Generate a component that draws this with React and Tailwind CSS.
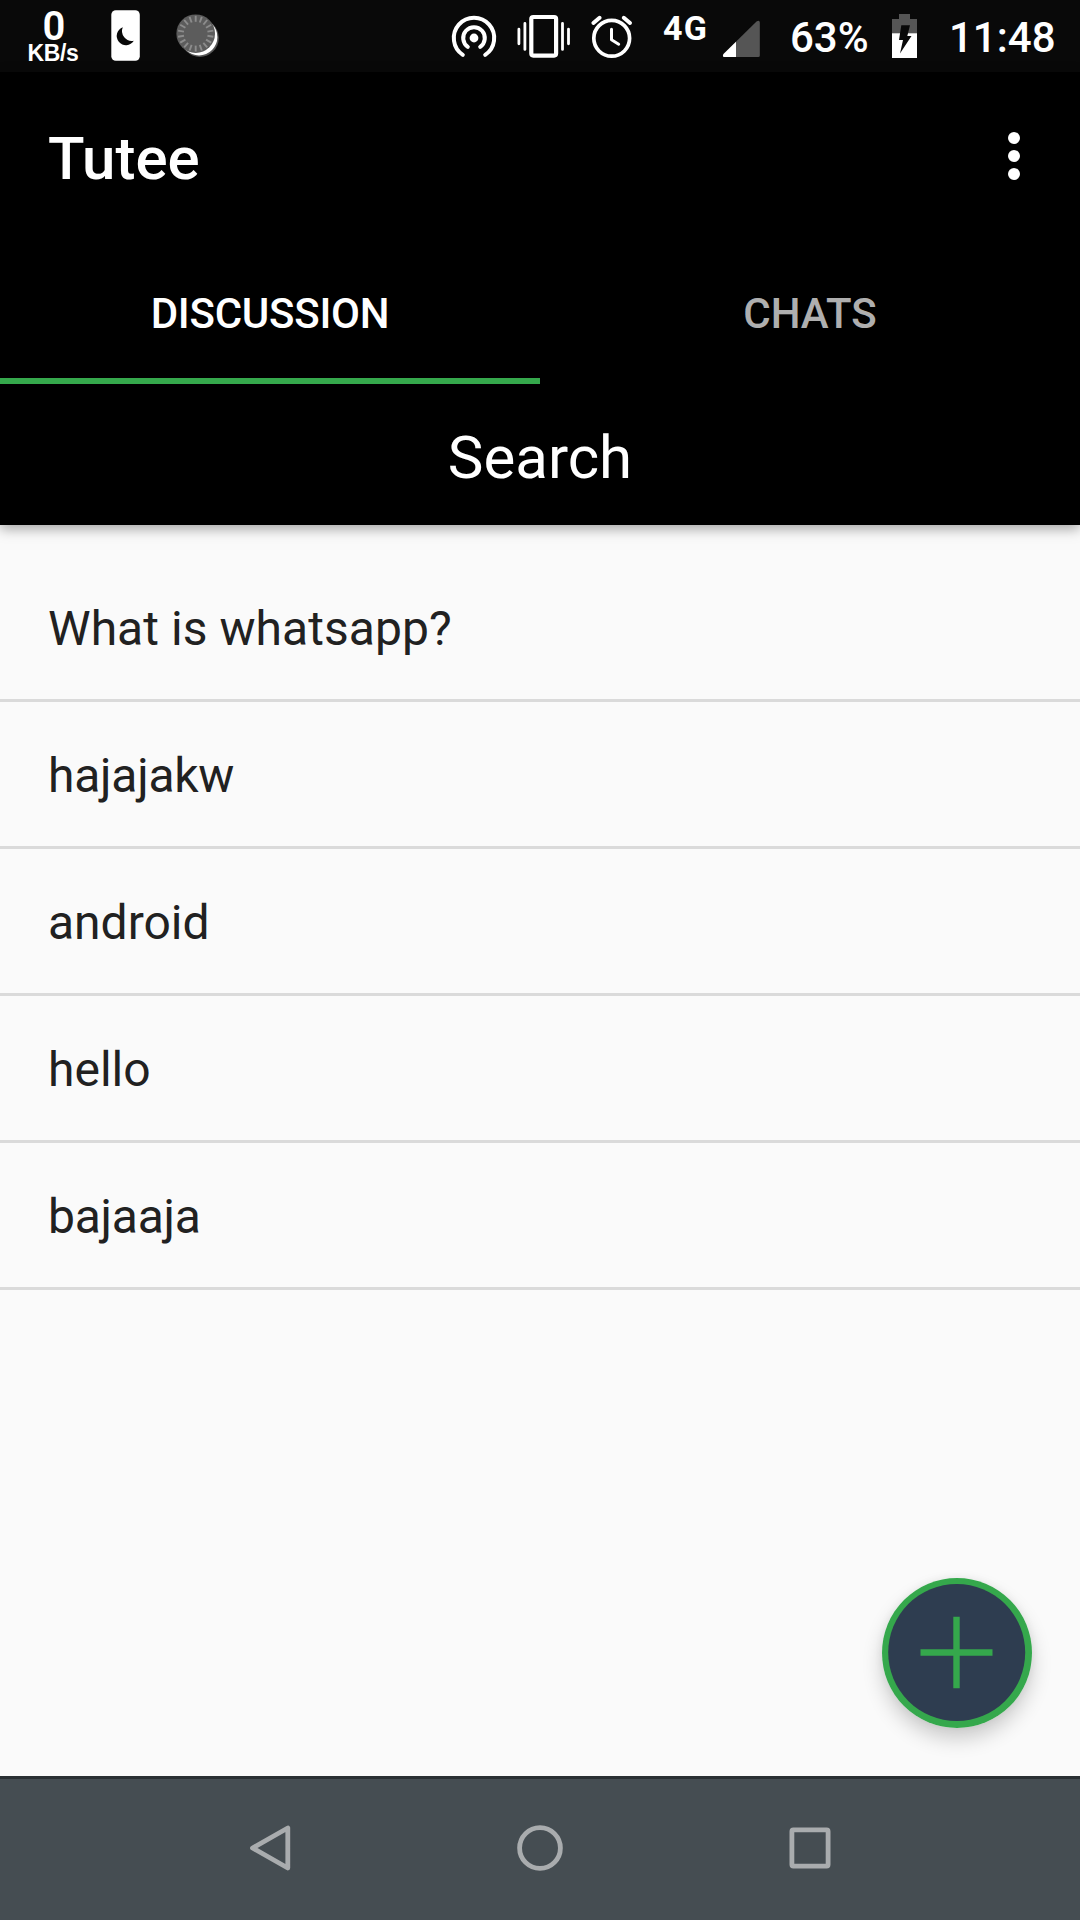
import React from 'react';

const topics = [
  { text: 'What is whatsapp?', tracking: 'tracking-[0.05px]' },
  { text: 'hajajakw', tracking: 'tracking-[-0.25px]' },
  { text: 'android', tracking: 'tracking-normal' },
  { text: 'hello', tracking: 'tracking-normal' },
  { text: 'bajaaja', tracking: 'tracking-[-0.25px]' },
];

const ticks = Array.from({ length: 18 }, (_, i) => i * 20);

function SystemBar() {
  return (
    <div className="flex h-[72px] w-full shrink-0 bg-[#090909] text-white">
      <div className="flex w-[106px] flex-col items-center pt-[6px] font-semibold">
        <span className="h-[37px] pl-[2px] text-[40px] leading-[41px]">0</span>
        <span className="font-['Liberation_Sans',sans-serif] text-[23px] leading-[20px] font-bold tracking-[-0.4px]">KB/s</span>
      </div>
      <svg className="h-[72px] w-[144px]" viewBox="106 0 144 72">
        <rect x="111.3" y="10.3" width="28.5" height="50.5" rx="4.5" fill="#fff" />
        <path d="M122.8 27.3A9.2 9.2 0 1 0 133.8 40.7A9.8 9.8 0 0 1 122.8 27.3Z" fill="#090909" />
        <circle cx="199.8" cy="37.9" r="19" fill="#555" />
        <circle cx="199" cy="37" r="18.4" fill="#fff" />
        <circle cx="195.7" cy="33.7" r="19.3" fill="#5c5c5c" />
        <g stroke="#8c8c8c" strokeWidth="1.9">
          {ticks.map((a) => (
            <path key={a} d="M195.7 15.8v6" transform={`rotate(${a} 195.7 33.7)`} />
          ))}
        </g>
      </svg>
      <svg className="ml-auto h-[72px] w-[210px] shrink-0" viewBox="444 0 210 72" fill="none" stroke="#fff" strokeLinecap="round" strokeLinejoin="round">
        <circle cx="474" cy="38" r="4.4" fill="#fff" stroke="none" />
        <path d="M467.8 46.8A10.8 10.8 0 1 1 480.2 46.8" strokeWidth="4" />
        <path d="M462.8 54.8A20.2 20.2 0 1 1 485.2 54.8" strokeWidth="4" />
        <rect x="531.3" y="17" width="24.8" height="38.6" rx="2" strokeWidth="4.2" />
        <path d="M518.9 29.2v14.6M524.9 23.4v26M562.5 23.4v26M568.5 29.2v14.6" strokeWidth="2.8" />
        <circle cx="611.7" cy="38.3" r="17.9" strokeWidth="3.7" />
        <path d="M593.4 23l6.2-5.2M623.8 17.8l6.2 5.2" strokeWidth="4" />
        <path d="M611.5 29.2v10.6l7.2 4.4" strokeWidth="3" />
      </svg>
      <div className="w-[66px] shrink-0 pt-[11px] pl-[9px] text-[34px] leading-[34px] font-bold tracking-[1.2px]">4G</div>
      <svg className="h-[72px] w-[70px] shrink-0" viewBox="720 0 70 72">
        <path d="M724 57Q722 56.5 723.5 54L756.5 21.5Q759.7 19.5 759.8 22.5V55.5Q759.8 57 758.3 57Z" fill="#555" />
        <path d="M736 57H724.2Q722 56.5 723.5 54L736 41.7Z" fill="#fff" />
      </svg>
      <div className="w-[102px] shrink-0 text-[42px] leading-[76px] font-medium">63%</div>
      <svg className="h-[72px] w-[56px] shrink-0" viewBox="892 0 56 72">
        <path d="M899 14h11v5h7v15h-25v-15h7Z" fill="#555" />
        <path d="M892 33.3h25V58h-25Z" fill="#fff" />
        <path d="M901.3 25.3H910L907.3 36H911.5L900 53.6L903 40H899Z" fill="#090909" />
      </svg>
      <div className="w-[132px] shrink-0 pl-[1px] text-[42px] leading-[76px] font-medium">11:48</div>
    </div>
  );
}

function Header() {
  return (
    <header className="relative z-10 flex h-[453px] shrink-0 flex-col bg-black text-white shadow-[0_4px_12px_rgba(0,0,0,0.34)]">
      <div className="flex h-[168px] items-center justify-between pr-[60px] pl-12">
        <h1 className="pt-[5px] text-[60px] leading-[70px] font-medium">Tutee</h1>
        <button className="flex flex-col gap-[6px]" aria-label="More options">
          <span className="size-3 rounded-full bg-white" />
          <span className="size-3 rounded-full bg-white" />
          <span className="size-3 rounded-full bg-white" />
        </button>
      </div>
      <nav className="grid h-[144px] grid-cols-2 text-center text-[42px] font-medium">
        <button className="border-b-6 border-[#35a84c] pt-[9px] tracking-[-0.25px]">DISCUSSION</button>
        <button className="border-b-6 border-transparent pt-[9px] text-white/70">CHATS</button>
      </nav>
      <div className="pt-[39px] text-center text-[60px] leading-[70px]">Search</div>
    </header>
  );
}

function AddButton() {
  return (
    <button className="absolute right-12 bottom-12 size-[150px] rounded-full shadow-[0_11px_20px_rgba(0,0,0,0.19),0_0_8px_rgba(0,0,0,0.06)]" aria-label="Add">
      <svg className="size-[150px]" viewBox="0 0 150 150">
        <circle cx="75" cy="75" r="75" fill="#35a84c" />
        <circle cx="74.7" cy="74.5" r="68.5" fill="#2e3d50" />
        <path d="M38.5 74.5H110.5M74.5 38.7V110.3" stroke="#35a84c" strokeWidth="6.4" />
      </svg>
    </button>
  );
}

function NavigationBar() {
  return (
    <div className="flex h-[144px] shrink-0 items-center justify-center gap-[222px] border-t-3 border-[#2a3033] bg-[#454d52]">
      <svg className="size-12 overflow-visible" viewBox="0 0 48 48" fill="none" stroke="#a9acae" strokeWidth="4.8" strokeLinejoin="round">
        <path d="M6.5 22L41.8 2V42Z" />
      </svg>
      <svg className="size-12 overflow-visible" viewBox="0 0 48 48" fill="none" stroke="#a9acae" strokeWidth="4.8">
        <circle cx="24" cy="22" r="20.4" />
      </svg>
      <svg className="size-12 overflow-visible" viewBox="0 0 48 48" fill="none" stroke="#a9acae" strokeWidth="4.8">
        <rect x="5.9" y="3.9" width="36.2" height="36.2" rx="1.5" />
      </svg>
    </div>
  );
}

export default function App() {
  return (
    <div className="flex h-[1920px] w-[1080px] flex-col overflow-hidden bg-[#fafafa] font-['Roboto',sans-serif]">
      <SystemBar />
      <Header />
      <main className="relative flex-1 pt-[30px]">
        <ul>
          {topics.map(({ text, tracking }) => (
            <li key={text} className={`h-[147px] border-b-3 border-[#dadada] pt-[2px] pl-12 text-[48px] leading-[144px] text-[#212121] ${tracking}`}>
              {text}
            </li>
          ))}
        </ul>
        <AddButton />
      </main>
      <NavigationBar />
    </div>
  );
}
